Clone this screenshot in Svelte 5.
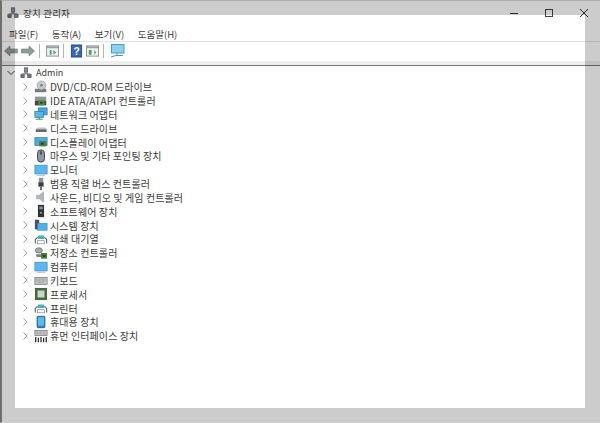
<script lang="ts">
  const menus = ['파일(F)', '동작(A)', '보기(V)', '도움말(H)'];

  const devices = [
    { label: 'DVD/CD-ROM 드라이브', icon: 'dvd' },
    { label: 'IDE ATA/ATAPI 컨트롤러', icon: 'ide' },
    { label: '네트워크 어댑터', icon: 'network' },
    { label: '디스크 드라이브', icon: 'disk' },
    { label: '디스플레이 어댑터', icon: 'display' },
    { label: '마우스 및 기타 포인팅 장치', icon: 'mouse' },
    { label: '모니터', icon: 'monitor' },
    { label: '범용 직렬 버스 컨트롤러', icon: 'usb' },
    { label: '사운드, 비디오 및 게임 컨트롤러', icon: 'sound' },
    { label: '소프트웨어 장치', icon: 'software' },
    { label: '시스템 장치', icon: 'system' },
    { label: '인쇄 대기열', icon: 'printer' },
    { label: '저장소 컨트롤러', icon: 'storage' },
    { label: '컴퓨터', icon: 'monitor' },
    { label: '키보드', icon: 'keyboard' },
    { label: '프로세서', icon: 'cpu' },
    { label: '프린터', icon: 'printer' },
    { label: '휴대용 장치', icon: 'portable' },
    { label: '휴먼 인터페이스 장치', icon: 'hid' }
  ];
</script>

{#snippet pc()}
  <svg class="ico" viewBox="0 0 14 14" width="12" height="12">
    <rect x="5" y="1" width="4" height="5" fill="#8a8f96" stroke="#4a4f55" stroke-width=".8" />
    <path d="M7 6v2M2 8h10" stroke="#555" stroke-width="1" fill="none" />
    <rect x="1" y="9" width="4" height="3.5" fill="#6d7278" stroke="#3c3f44" stroke-width=".6" />
    <rect x="9" y="9" width="4" height="3.5" fill="#6d7278" stroke="#3c3f44" stroke-width=".6" />
  </svg>
{/snippet}

{#snippet deviceIcon(name: string)}
  <svg class="ico" viewBox="0 0 16 16" width="14" height="14">
    {#if name === 'dvd'}
      <rect x="1" y="10" width="13" height="4" fill="#777c80" />
      <ellipse cx="8.5" cy="6" rx="5" ry="5" fill="#c5ccd2" stroke="#8d9498" stroke-width=".7" />
      <circle cx="8.5" cy="6" r="1.4" fill="#6f777d" />
    {:else if name === 'ide'}
      <rect x="1" y="3" width="13" height="5" fill="#8e9499" />
      <rect x="1" y="8" width="13" height="5" fill="#3f4448" />
      <rect x="5" y="7" width="7" height="6" fill="#4f8f3c" />
      <rect x="7" y="9" width="3" height="2" fill="#20401a" />
    {:else if name === 'network'}
      <rect x="5" y="1" width="10" height="8" fill="#4aa3dc" stroke="#2679b2" stroke-width=".8" />
      <rect x="1" y="5" width="10" height="7" fill="#59b6e8" stroke="#2679b2" stroke-width=".8" />
      <path d="M2 14h8M6 12v2" stroke="#4b9a3c" stroke-width="1.4" fill="none" />
    {:else if name === 'disk'}
      <path d="M2 9.500 3.500 7.500h10l1 2z" fill="#c3c7ca" />
      <rect x="2" y="9.500" width="12.500" height="3" fill="#5f6468" />
    {:else if name === 'display'}
      <rect x="1" y="3" width="14" height="9" fill="#4fa8e0" stroke="#2f7fb8" stroke-width=".8" />
      <rect x="6" y="7" width="8" height="6" fill="#4d7f38" />
      <rect x="8" y="9" width="3" height="2" fill="#1f3d18" />
    {:else if name === 'mouse'}
      <rect x="4" y="1" width="8" height="14" rx="4" fill="#8e98a6" stroke="#2f3944" stroke-width="1" />
      <path d="M8 2.500v4" stroke="#2f3944" stroke-width="1.600" />
    {:else if name === 'monitor'}
      <rect x="1" y="2.500" width="14" height="10" fill="#5cb8ec" stroke="#3a8cc4" stroke-width=".8" />
      <path d="M3 14h10" stroke="#a9b2b8" stroke-width="1" />
    {:else if name === 'usb'}
      <rect x="5.500" y="1" width="5" height="5" fill="#8b9196" />
      <rect x="5" y="6" width="6" height="5" fill="#3a3e42" />
      <rect x="7" y="11" width="2" height="4" fill="#5a5e62" />
    {:else if name === 'sound'}
      <path d="M3 6h3l5-4v12l-5-4H3z" fill="#b3b8bc" stroke="#92979b" stroke-width=".6" />
    {:else if name === 'software'}
      <rect x="4.500" y="1" width="7" height="14" fill="#2f3337" />
      <rect x="6" y="3" width="4" height="3" fill="#8f979c" />
      <rect x="7" y="9" width="2" height="2" fill="#8ec25a" />
    {:else if name === 'system'}
      <rect x="1" y="2" width="5" height="11" fill="#4a5056" />
      <rect x="4" y="6" width="11" height="8" fill="#4fb0e6" stroke="#2f85bd" stroke-width=".6" />
    {:else if name === 'printer'}
      <path d="M1.500 13V8.500L3.500 6.500h9l2 2V13" fill="none" stroke="#555b60" stroke-width="1.200" />
      <rect x="4.500" y="4" width="7" height="4" fill="#4eb0b8" />
      <rect x="4" y="10" width="8" height="3.500" fill="#fff" stroke="#71777c" stroke-width=".7" />
    {:else if name === 'storage'}
      <ellipse cx="5.500" cy="5" rx="4" ry="3" fill="#a6abaf" stroke="#555" stroke-width=".7" />
      <path d="M2 9.500h6l2 3H3z" fill="#7e8388" />
      <rect x="8" y="8" width="7" height="6.500" fill="#587f36" />
      <rect x="10" y="10" width="3" height="2.500" fill="#26401a" />
    {:else if name === 'keyboard'}
      <rect x="1" y="5" width="14" height="8" fill="#c6c9cc" stroke="#6e7276" stroke-width=".8" />
      <path d="M2.500 7h11M2.500 9h11M4 11h8" stroke="#85898d" stroke-width="1" stroke-dasharray="1 .6" />
    {:else if name === 'cpu'}
      <rect x="1.500" y="1.500" width="13" height="13" fill="#3f6b34" stroke="#2f5128" stroke-width=".8" />
      <rect x="4" y="4" width="8" height="8" fill="#cfd3d0" stroke="#8d9790" stroke-width=".5" />
    {:else if name === 'portable'}
      <rect x="3.500" y="1.500" width="9" height="13" rx="1" fill="#2f8fd3" stroke="#23405a" stroke-width=".8" />
      <rect x="4.500" y="2.500" width="7" height="9.500" fill="#5cbcec" />
    {:else}
      <rect x="1" y="1.500" width="14" height="6" fill="#c9ccce" stroke="#6f7377" stroke-width=".8" />
      <path d="M2 3.500h12M2 5.500h12" stroke="#888c90" stroke-dasharray="1 .6" />
      <path d="M2 9v6M5 10v5M8 9v6M11 10v5M14 9v6" stroke="#30353a" stroke-width="1.500" />
    {/if}
  </svg>
{/snippet}

<div class="window">
  <header class="titlebar">
    {@render pc()}
    <span class="title">장치 관리자</span>
    <div class="controls">
      <svg viewBox="0 0 10 10" width="10" height="10"><path d="M1 5.500h8" stroke="#333" stroke-width="1" /></svg>
      <svg viewBox="0 0 10 10" width="10" height="10"><rect x="1.500" y="1.500" width="7" height="7" fill="none" stroke="#444" stroke-width="1" /></svg>
      <svg viewBox="0 0 10 10" width="10" height="10"><path d="M1 1l8 8M9 1l-8 8" stroke="#333" stroke-width="1" /></svg>
    </div>
  </header>

  <nav class="menubar">
    {#each menus as menu}
      <span>{menu}</span>
    {/each}
  </nav>

  <div class="toolbar">
    <svg viewBox="0 0 14 12" width="14" height="12"><path d="M0.500 6 6 1v3h7.500v4H6v3z" fill="#8d9d9a" stroke="#6f7d7a" stroke-width=".6" /></svg>
    <svg viewBox="0 0 14 12" width="14" height="12"><path d="M13.500 6 8 1v3H.5v4H8v3z" fill="#8d9d9a" stroke="#6f7d7a" stroke-width=".6" /></svg>
    <i class="sep"></i>
    <svg viewBox="0 0 14 12" width="13" height="12">
      <rect x=".5" y=".5" width="13" height="11" fill="#eef2ee" stroke="#8c9296" />
      <rect x="1" y="1" width="12" height="2" fill="#9aa1a5" />
      <path d="M4 5h2v5H4zM8 5l3 2.500L8 10z" fill="#5f9a8a" />
    </svg>
    <i class="sep"></i>
    <svg viewBox="0 0 14 14" width="13" height="14">
      <rect x="1.500" y=".5" width="11" height="13" fill="#3a66b8" stroke="#27478a" />
      <text x="7" y="11" text-anchor="middle" class="help">?</text>
    </svg>
    <svg viewBox="0 0 14 12" width="13" height="12">
      <rect x=".5" y=".5" width="13" height="11" fill="#eef2ee" stroke="#8c9296" />
      <rect x="1" y="1" width="12" height="2" fill="#9aa1a5" />
      <path d="M3 5h3v5H3zM9 5l2 2.500L9 10z" fill="#5f9a6a" />
    </svg>
    <i class="sep"></i>
    <svg viewBox="0 0 15 14" width="15" height="14">
      <rect x="1.500" y=".5" width="12.500" height="8.500" fill="#8fd0ee" stroke="#4b9bc8" />
      <path d="M7 9v2.500M1 13l5-1.500h7" stroke="#5d8fa8" stroke-width="1" fill="none" />
    </svg>
  </div>

  <main class="tree">
    <div class="row root">
      <svg class="chev" viewBox="0 0 8 8" width="8" height="8"><path d="M.5 2 4 5.500 7.500 2" fill="none" stroke="#444" stroke-width="1" /></svg>
      {@render pc()}
      <span class="root-label">Admin</span>
    </div>
    {#each devices as device}
      <div class="row child">
        <svg class="chev" viewBox="0 0 8 8" width="8" height="8"><path d="M2.500.5 6 4 2.500 7.500" fill="none" stroke="#a6a6a6" stroke-width="1" /></svg>
        {@render deviceIcon(device.icon)}
        <span>{device.label}</span>
      </div>
    {/each}
  </main>

  <div class="scrim"></div>
</div>

<style>
  :global(body) {
    margin: 0;
  }

  .window {
    position: relative;
    box-sizing: border-box;
    width: 600px;
    height: 423px;
    overflow: hidden;
    background: #fff;
    border-top: 1px solid #b0b0b0;
    border-left: 2px solid #6e6e6e;
    border-bottom: 1px solid #d0d0d0;
    font-family: "Noto Sans CJK KR", "Noto Sans", sans-serif;
    font-size: 10px;
    color: #3c3c3c;
  }

  .titlebar {
    display: flex;
    align-items: center;
    height: 25px;
    padding-left: 5px;
    padding-bottom: 2px;
    box-sizing: border-box;
  }

  .title {
    margin-left: 4px;
    font-size: 9.500px;
    letter-spacing: .2px;
  }

  .controls {
    display: flex;
    gap: 25px;
    margin-left: auto;
    margin-right: 11px;
  }

  .menubar {
    display: flex;
    gap: 13.500px;
    height: 15px;
    align-items: center;
    padding-left: 7px;
    border-bottom: 1px solid #e3e3e3;
    font-size: 9.500px;
  }

  .toolbar {
    display: flex;
    align-items: center;
    box-sizing: border-box;
    height: 23px;
    padding: 0 0 1px 2px;
    gap: 3px;
    border-bottom: 4px solid #eee;
    box-shadow: 0 1px 0 #7a7a7a;
  }

  .sep {
    width: 1px;
    height: 14px;
    background: #b5b5b5;
    margin: 0 3px 0 1px;
  }

  .help {
    fill: #fff;
    font-size: 11px;
    font-weight: 700;
    font-family: "Liberation Sans", sans-serif;
  }

  .tree {
    padding: 1px 0 0 5px;
  }

  .row {
    display: flex;
    align-items: center;
    height: 13.830px;
    white-space: nowrap;
  }

  .chev {
    flex: none;
  }

  .root .ico {
    margin-left: 5px;
  }

  .root-label {
    margin-left: 4px;
    font-size: 9px;
  }

  .child {
    padding-left: 14px;
  }

  .child .ico {
    margin-left: 5px;
    flex: none;
  }

  .child span {
    margin-left: 2px;
    letter-spacing: .1px;
  }

  .scrim {
    position: absolute;
    inset: -1px 0 -1px -2px;
    box-sizing: border-box;
    border: solid rgba(0, 0, 0, .2);
    border-width: 15px;
    pointer-events: none;
  }
</style>
